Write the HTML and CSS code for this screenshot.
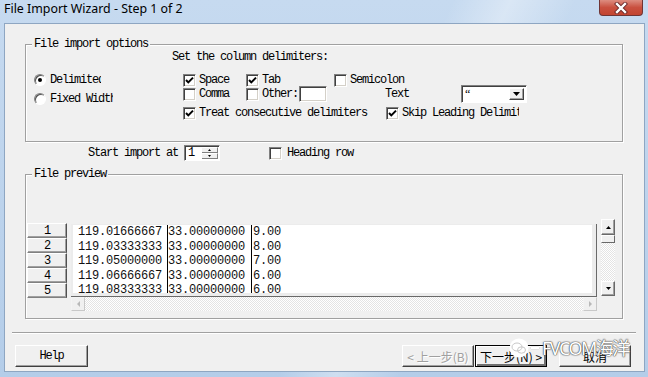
FILE: index.html
```html
<!DOCTYPE html>
<html lang="en">
<head>
  <meta charset="UTF-8" />
  <title>File Import Wizard - Step 1 of 2</title>
  <link rel="stylesheet" href="styles.css">
</head>
<body>
<div class="window">
  <div class="titlebar">
    <span class="title">File Import Wizard - Step 1 of 2</span>
    <div class="close-btn">
      <svg width="16" height="12" viewBox="0 0 16 12"><path d="M4 2 L12 10 M12 2 L4 10" stroke="#6b2a2a" stroke-width="4.2" stroke-linecap="square"/><path d="M4 2 L12 10 M12 2 L4 10" stroke="#fff" stroke-width="2.4" stroke-linecap="square"/></svg>
    </div>
  </div>

  <div class="client">
    <!-- File import options -->
    <div class="group group-options">
      <span class="group-label">File import options</span>
      <div class="radio-col">
        <div class="radio-item"><span class="radio checked"></span><span class="clip clip-delim">Delimited</span></div>
        <div class="radio-item"><span class="radio"></span><span class="clip clip-fixed">Fixed Width</span></div>
      </div>
      <div class="delim-col">
        <div class="delim-title">Set the column delimiters:</div>
        <div class="delim-row">
          <div class="check-item w-col1"><span class="check on"><svg width="11" height="11" viewBox="0 0 11 11"><path d="M2 5 L4.3 7.4 L9 2.6" stroke="#000" stroke-width="2" fill="none"/></svg></span>Space</div>
          <div class="check-item w-col2"><span class="check on"><svg width="11" height="11" viewBox="0 0 11 11"><path d="M2 5 L4.3 7.4 L9 2.6" stroke="#000" stroke-width="2" fill="none"/></svg></span>Tab</div>
          <div class="check-item"><span class="check"></span>Semicolon</div>
        </div>
        <div class="delim-row">
          <div class="check-item w-col1"><span class="check"></span>Comma</div>
          <div class="check-item"><span class="check"></span>Other:</div>
          <span class="textbox other-box"></span>
          <span class="text-label">Text</span>
          <div class="combo"><span class="combo-value">&ldquo;</span><span class="combo-btn"><svg width="7" height="4" viewBox="0 0 7 4"><path d="M0 0 H7 L3.5 4 Z" fill="#000"/></svg></span></div>
        </div>
        <div class="delim-row row-last">
          <div class="check-item w-treat"><span class="check on"><svg width="11" height="11" viewBox="0 0 11 11"><path d="M2 5 L4.3 7.4 L9 2.6" stroke="#000" stroke-width="2" fill="none"/></svg></span>Treat consecutive delimiters</div>
          <div class="check-item"><span class="check on"><svg width="11" height="11" viewBox="0 0 11 11"><path d="M2 5 L4.3 7.4 L9 2.6" stroke="#000" stroke-width="2" fill="none"/></svg></span><span class="clip clip-skip">Skip Leading Delimiters</span></div>
        </div>
      </div>
    </div>

    <!-- Start row -->
    <div class="start-row">
      <span>Start import at</span>
      <div class="spin">
        <span class="spin-value">1</span>
        <span class="spin-btns">
          <span class="spin-btn"><svg width="3" height="2" viewBox="0 0 3 2"><path d="M0 2 H3 L1.5 0 Z" fill="#000"/></svg></span>
          <span class="spin-btn"><svg width="3" height="2" viewBox="0 0 3 2"><path d="M0 0 H3 L1.5 2 Z" fill="#000"/></svg></span>
        </span>
      </div>
      <div class="check-item heading"><span class="check"></span>Heading row</div>
    </div>

    <!-- File preview -->
    <div class="group group-preview">
      <span class="group-label">File preview</span>
      <div class="row-heads">
        <div class="row-head">1</div>
        <div class="row-head">2</div>
        <div class="row-head">3</div>
        <div class="row-head">4</div>
        <div class="row-head">5</div>
      </div>
      <div class="data-col">
        <div class="data-box">
          <div class="data">
            <div class="col col-a">
              <div>119.01666667</div><div>119.03333333</div><div>119.05000000</div><div>119.06666667</div><div>119.08333333</div>
            </div>
            <div class="col col-b">
              <div>33.00000000</div><div>33.00000000</div><div>33.00000000</div><div>33.00000000</div><div>33.00000000</div>
            </div>
            <div class="col col-c">
              <div>9.00</div><div>8.00</div><div>7.00</div><div>6.00</div><div>6.00</div>
            </div>
          </div>
        </div>
        <div class="hscroll">
          <span class="sb-btn"><svg width="3" height="6" viewBox="0 0 3 6"><path d="M3 0 V6 L0 3 Z" fill="#b8b8b8"/></svg></span>
          <span class="track"></span>
          <span class="sb-btn"><svg width="3" height="6" viewBox="0 0 3 6"><path d="M0 0 V6 L3 3 Z" fill="#b8b8b8"/></svg></span>
        </div>
      </div>
      <div class="vscroll">
        <div class="vs-btn vs-up"><svg width="5" height="3" viewBox="0 0 5 3"><path d="M0 3 H5 L2.5 0 Z" fill="#000"/></svg></div>
        <div class="vs-thumb"></div>
        <div class="vs-track"></div>
        <div class="vs-btn vs-down"><svg width="5" height="3" viewBox="0 0 5 3"><path d="M0 0 H5 L2.5 3 Z" fill="#000"/></svg></div>
      </div>
    </div>

    <div class="separator"></div>

    <!-- Buttons -->
    <div class="button-row">
      <button class="btn btn-help">Help</button>
      <button class="btn btn-cjk disabled">&lt; 上一步(B)</button>
      <button class="btn btn-cjk default">下一步(N) &gt;</button>
      <button class="btn btn-cjk btn-cancel">取消</button>
    </div>
  </div>

  <!-- watermark -->
  <div class="watermark">
    <svg width="20" height="20" viewBox="0 0 20 20"><circle cx="10" cy="10" r="9.5" fill="#fff"/><ellipse cx="8" cy="9" rx="5" ry="4" fill="none" stroke="#c8c8c8" stroke-width="1"/><ellipse cx="12.5" cy="12" rx="4" ry="3.2" fill="none" stroke="#c8c8c8" stroke-width="1"/></svg>
    <span class="wm-dash"></span>
    <span class="wm-text">FVCOM海洋</span>
  </div>
</div>
</body>
</html>
```

FILE: styles.css
```css
/* Reset & fonts */
* { margin:0; padding:0; box-sizing:border-box }
body {
  width:648px; height:377px; overflow:hidden;
  font-family:"Liberation Mono", "Noto Sans CJK SC", monospace;
  font-size:12px; letter-spacing:-1.2px; color:#000;
}

/* Window frame */
.window {
  position:relative; width:648px; height:377px;
  display:flex; flex-direction:column;
  background:
    linear-gradient(115deg, transparent 55%, rgba(255,255,255,0.35) 62%, transparent 70%),
    linear-gradient(#c6daf0, #b4cde9);
}
.titlebar { height:23px; display:flex; align-items:flex-start; }
.title {
  font-family:"Noto Sans", sans-serif; font-size:12.4px; letter-spacing:0;
  color:#000; padding:1px 0 0 4px; line-height:16px;
}
.close-btn {
  margin-left:auto; margin-right:5px; width:44px; height:16px;
  display:flex; align-items:center; justify-content:center;
  border:1px solid #6f3535; border-top:none; border-radius:0 0 4px 4px;
  background:linear-gradient(#dd8d80, #c9503f 50%, #c24531);
}

.client {
  flex:1; margin:0 3px 5px 4px;
  background:#f0f0f0; border:1px solid #8ea6c2;
  padding-top:20px;
}

/* Group boxes */
.group {
  position:relative; margin:0 21px 0 20px;
  border:1px solid #a0a0a0;
  box-shadow:inset 1px 1px #fff, 1px 1px #fff;
  display:flex;
}
.group-label {
  position:absolute; top:-7px; left:6px; padding:0 2px;
  background:#f0f0f0; line-height:12px;
}
.group-options { height:98px; padding:5px 0 0 8px; }

.radio-col { width:138px; padding-top:23px; }
.radio-item { display:flex; align-items:center; height:13px; margin-bottom:6px; gap:4px; }
.radio {
  width:12px; height:12px; border-radius:50%; flex:none; position:relative;
  background:#fff; border:1px solid; border-color:#808080 #fff #fff #808080;
  box-shadow:inset 1px 1px #505050;
}
.radio.checked::after {
  content:""; position:absolute; left:3px; top:3px; width:4px; height:4px;
  border-radius:50%; background:#000;
}
.clip { white-space:nowrap; overflow:hidden; display:block; line-height:14px; }
.clip-delim { width:51px; }
.clip-fixed { width:63px; }
.clip-skip { width:117px; }

.delim-title { line-height:14px; }
.delim-row { display:flex; align-items:center; height:14px; padding-left:11px; margin-top:9px; }
.delim-row + .delim-row { margin-top:0; }
.delim-row.row-last { margin-top:5px; }

.check-item { display:flex; align-items:center; gap:3px; white-space:nowrap; line-height:14px; }
.w-col1 { width:63px; }
.w-col2 { width:88px; }
.w-treat { width:203px; }
.check {
  width:13px; height:13px; flex:none;
  display:flex; align-items:center; justify-content:center;
  background:#fff; border:1px solid; border-color:#808080 #fff #fff #808080;
  box-shadow:inset 1px 1px #404040, inset -1px -1px #d4d0c8;
}

.textbox {
  display:block; background:#fff; border:1px solid; border-color:#808080 #fff #fff #808080;
  box-shadow:inset 1px 1px #404040, inset -1px -1px #d4d0c8;
}
.other-box { width:28px; height:16px; margin-left:1px; }
.text-label { margin-left:58px; }
.combo {
  margin-left:52px; width:66px; height:18px; display:flex; align-items:stretch;
  background:#fff; border:1px solid; border-color:#808080 #fff #fff #808080;
  box-shadow:inset 1px 1px #404040; padding:2px 2px 2px 3px;
}
.combo-value { flex:1; line-height:12px; font-family:"Liberation Serif", serif; }
.combo-btn {
  width:15px; display:flex; align-items:center; justify-content:center;
  background:#f0f0f0; border:1px solid; border-color:#fff #404040 #404040 #fff;
  box-shadow:inset -1px -1px #a0a0a0;
}

/* Start import row */
.start-row { display:flex; align-items:center; height:16px; margin-top:3px; padding-left:83px; }
.spin {
  margin-left:6px; width:36px; height:16px; display:flex;
  background:#fff; border:1px solid; border-color:#808080 #fff #fff #808080;
  box-shadow:inset 1px 1px #404040; padding:1px;
}
.spin-value { flex:1; padding-left:2px; line-height:13px; }
.spin-btns { width:16px; display:flex; flex-direction:column; }
.spin-btn {
  flex:1; display:flex; align-items:center; justify-content:center; background:#f0f0f0;
  border-right:1px solid #808080; border-bottom:1px solid #808080; border-top:1px solid #fff;
}
.heading { margin-left:49px; gap:5px; }

/* File preview */
.group-preview { height:145px; margin-top:13px; padding:44px 0 0 1px; align-items:flex-start; }
.row-heads { width:40px; margin-top:4px; }
.row-head {
  height:15px; text-align:center; line-height:14px;
  background:#f0f0f0; border:1px solid; border-color:#fff #505050 #808080 #fff;
  box-shadow:inset -1px -1px #a0a0a0;
}
.data-col { width:526px; margin:5px 0 0 4px; }
.data-box {
  height:73px; padding:1px 4px 3px 2px;
  background:#ececec; border-right:1px solid #696969; border-bottom:1px solid #696969;
}
.data {
  height:100%; background:#fff; display:flex;
  font-family:"Liberation Mono", monospace; font-size:12px; letter-spacing:-0.2px;
  line-height:14.6px; color:#111;
}
.col-a { width:94px; padding-left:5px; }
.col-b { width:84px; border-left:1px solid #000; }
.col-c { flex:1; border-left:1px solid #000; padding-left:1px; }

.hscroll { height:14px; display:flex; }
.track {
  flex:1;
  background:repeating-conic-gradient(#fff 0 25%, #e4e4e4 0 50%) 0 0 / 2px 2px;
}
.sb-btn {
  width:14px; height:14px; flex:none; display:flex; align-items:center; justify-content:center;
  background:#f0f0f0; border:1px solid; border-color:#f4f4f4 #c8c8c8 #c8c8c8 #f4f4f4;
}

.vscroll { width:14px; margin-left:4px; }
.vs-btn {
  height:16px; display:flex; align-items:center; justify-content:center;
  background:#f0f0f0; border:1px solid; border-color:#fff #696969 #696969 #fff;
  box-shadow:inset -1px -1px #a0a0a0;
}
.vs-down { height:15px; }
.vs-thumb {
  height:8px; background:#f0f0f0; border:1px solid; border-color:#fff #696969 #696969 #fff;
}
.vs-track {
  height:38px;
  background:repeating-conic-gradient(#fff 0 25%, #e4e4e4 0 50%) 0 0 / 2px 2px;
}

.separator {
  margin:13px 8px 0 7px; height:2px;
  border-top:1px solid #a0a0a0; border-bottom:1px solid #fff;
}

/* Buttons */
.button-row { display:flex; margin-top:11px; padding:0 13px 0 10px; }
.btn {
  width:72px; height:22px; background:#f0f0f0; color:#000;
  border:1px solid; border-color:#fff #404040 #404040 #fff;
  box-shadow:inset -1px -1px #a0a0a0;
  font-family:"Liberation Mono", monospace; font-size:12px; letter-spacing:-1.2px;
}
.btn-help { width:73px; }
.btn-cjk { font-family:"Noto Sans CJK SC", sans-serif; letter-spacing:0; font-size:12px; }
.btn-cjk.disabled { margin-left:auto; color:#a0a0a0; text-shadow:1px 1px #fff; }
.btn-cjk.default { margin-left:1px; border:1px solid #000; box-shadow:inset 1px 1px #fff, inset -2px -2px #707070; }
.btn-cancel { margin-left:12px; }

/* Watermark */
.watermark {
  position:absolute; left:509px; top:338px;
  display:flex; align-items:center; gap:2px;
}
.wm-dash { width:8px; height:2px; background:#fff; box-shadow:0 0 1px #666; margin-right:1px; }
.wm-text {
  font-family:"Noto Sans", "Noto Sans CJK SC", sans-serif; font-size:18px; letter-spacing:-1.5px;
  line-height:20px; color:#fff;
  text-shadow:0 0 1px #444, 0 0 1px #444, 0 0 2px #777;
}
```
